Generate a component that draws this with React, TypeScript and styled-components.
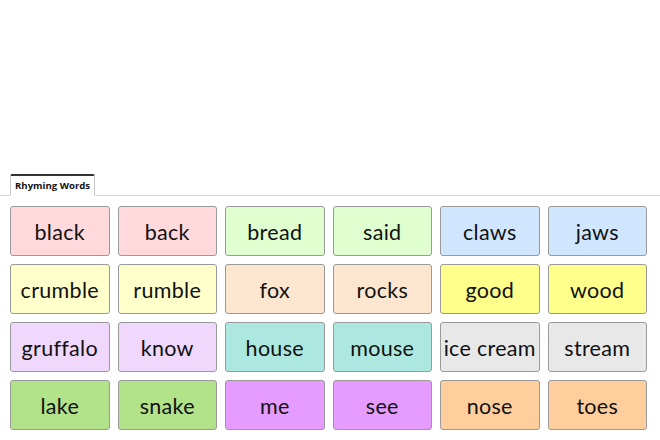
import styled, {createGlobalStyle} from "styled-components";

const GlobalStyle = createGlobalStyle`
  html, body {
    margin: 0;
    padding: 0;
    background: #ffffff;
  }
  body {
    width: 660px;
    height: 440px;
    overflow: hidden;
  }
`;

const Page = styled.div`
  display: flex;
  flex-direction: column;
  width: 660px;
  height: 440px;
`;

const Blank = styled.div`
  height: 174px;
`;

const TabBar = styled.div`
  display: flex;
  padding-left: 10px;
  border-bottom: 1px solid #d4d4d4;
  height: 21px;
`;

const Tab = styled.div`
  display: flex;
  align-items: center;
  padding: 0 4px 0 4px;
  margin-bottom: -1px;
  background: #ffffff;
  border: 1px solid #c8c8c8;
  border-top: 2px solid #333333;
  border-bottom: 1px solid #ffffff;
  border-radius: 2px 2px 0 0;
  font-family: "Open Sans", sans-serif;
  font-weight: 700;
  font-size: 9.6px;
  color: #111111;
`;

const Grid = styled.div`
  display: grid;
  grid-template-columns: repeat(6, 1fr);
  grid-auto-rows: 50px;
  gap: 8px;
  padding: 10px 13px 0 10px;
`;

interface ITile {
  bg: string;
}

const Tile = styled.div<ITile>`
  display: flex;
  justify-content: center;
  align-items: center;
  padding-top: 1px;
  background: ${props => props.bg};
  border: 1px solid #9a9a9a;
  border-radius: 3px;
  font-family: "Lato", sans-serif;
  font-size: 21.5px;
  letter-spacing: 0.3px;
  color: #111111;
  white-space: nowrap;
  overflow: hidden;
`;

const words: [string, string][] = [
  ["black", "#ffd9dc"],
  ["back", "#ffd9dc"],
  ["bread", "#e0ffd0"],
  ["said", "#e0ffd0"],
  ["claws", "#d0e6ff"],
  ["jaws", "#d0e6ff"],
  ["crumble", "#ffffcc"],
  ["rumble", "#ffffcc"],
  ["fox", "#fce6d0"],
  ["rocks", "#fce6d0"],
  ["good", "#ffff8c"],
  ["wood", "#ffff8c"],
  ["gruffalo", "#f0d8fc"],
  ["know", "#f0d8fc"],
  ["house", "#ace8e0"],
  ["mouse", "#ace8e0"],
  ["ice cream", "#e8e8e8"],
  ["stream", "#e8e8e8"],
  ["lake", "#b2e28a"],
  ["snake", "#b2e28a"],
  ["me", "#e69cff"],
  ["see", "#e69cff"],
  ["nose", "#ffce9c"],
  ["toes", "#ffce9c"],
];

const App = () => {
  return (
    <>
      <GlobalStyle />
      <Page>
        <Blank />
        <TabBar>
          <Tab>Rhyming Words</Tab>
        </TabBar>
        <Grid>
          {words.map(([w, bg]) => (
            <Tile key={w} bg={bg}>
              {w}
            </Tile>
          ))}
        </Grid>
      </Page>
    </>
  );
};

export default App;
